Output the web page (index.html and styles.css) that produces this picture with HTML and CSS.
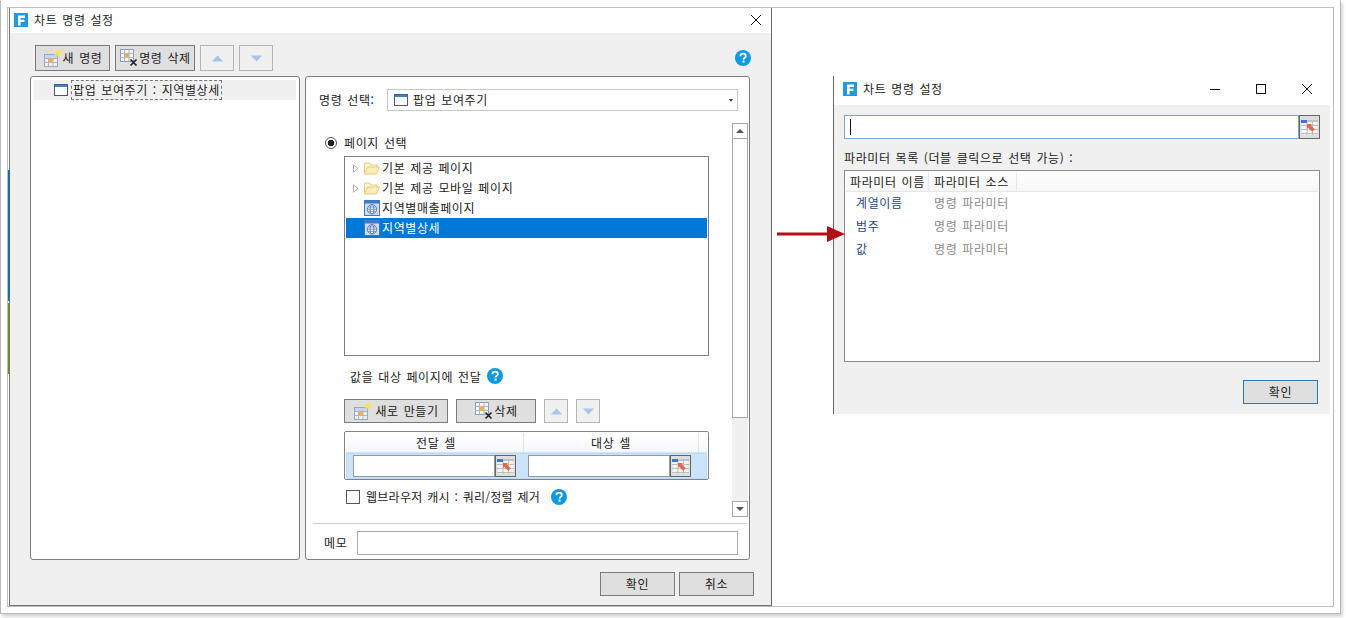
FILE: index.html
```html
<!DOCTYPE html>
<html lang="ko">
<head>
<meta charset="utf-8">
<title>차트 명령 설정</title>
<link rel="stylesheet" href="styles.css">
</head>
<body>
<svg class="defs" width="0" height="0" aria-hidden="true">
  <symbol id="i-logo" viewBox="0 0 14 14"><rect width="14" height="14" fill="#1b9ce2"/><path d="M4 2.5h7v2.4H6.6v1.9h3.9v2.3H6.6v3.4H4z" fill="#fff"/></symbol>
  <symbol id="i-win" viewBox="0 0 14 12"><rect x=".5" y=".5" width="13" height="11" fill="#fff" stroke="#4a5a78"/><rect x="1" y="1" width="12" height="2" fill="#3f7fd6"/></symbol>
  <symbol id="i-new" viewBox="0 0 20 20"><rect x="1.5" y="6.5" width="13" height="12" fill="#eef2f8" stroke="#9aa6b8"/><path d="M1.5 10.500h13M1.500 14.500h13M5.500 6.500v12M10 6.500v12" stroke="#a9b4c6"/><rect x="6" y="10.500" width="4" height="4" fill="#f3b04a"/><rect x="2" y="7" width="12" height="3" fill="#c7d6ee"/><path d="M15 .5l1 3 3-1-2 2.500 2 2.500-3-1-1 3-1-3-3 1 2-2.500-2-2.500 3 1z" fill="#ffe14d"/></symbol>
  <symbol id="i-del" viewBox="0 0 20 20"><rect x="1.500" y="1.500" width="13" height="12" fill="#f4f6fa" stroke="#8f9bb0"/><path d="M1.500 5.500h13M1.500 9.500h13M5.500 1.500v12M10 1.500v12" stroke="#a9b4c6"/><rect x="6" y="5.500" width="4" height="4" fill="#f3b04a"/><path d="M11.500 11.500l6 6M17.500 11.500l-6 6" stroke="#222" stroke-width="1.700"/></symbol>
  <symbol id="i-up" viewBox="0 0 14 8"><path d="M7 .5l6.500 7H.5z" fill="#a9c3ec"/></symbol>
  <symbol id="i-down" viewBox="0 0 14 8"><path d="M.5.500h13L7 7.500z" fill="#a9c3ec"/></symbol>
  <symbol id="i-help" viewBox="0 0 16 16"><circle cx="8" cy="8" r="8" fill="#0f9ae0"/><path d="M5.300 6.200C5.400 4.500 6.600 3.600 8.100 3.600c1.600 0 2.700.9 2.700 2.300 0 2-2.200 2-2.200 3.600" fill="none" stroke="#fff" stroke-width="1.800"/><rect x="7.500" y="10.600" width="2" height="2" fill="#fff"/></symbol>
  <symbol id="i-folder" viewBox="0 0 16 13"><path d="M.5 11.500V1.500h5l1.500 2h6v2" fill="#fff6d8" stroke="#e8c778"/><path d="M.5 12.500l3-7h12l-3 7z" fill="#fdeeb8" stroke="#e8c778"/></symbol>
  <symbol id="i-page" viewBox="0 0 16 16"><rect x=".5" y=".5" width="15" height="15" fill="#cfdcf3" stroke="#3f78c4"/><rect x="1" y="1" width="14" height="2.500" fill="#3f78c4"/><circle cx="8" cy="9.300" r="4.700" fill="#eef3fb" stroke="#5f86bd"/><ellipse cx="8" cy="9.300" rx="2" ry="4.700" fill="none" stroke="#5f86bd"/><path d="M3.300 9.300h9.400M4 7h8M4 11.600h8" stroke="#5f86bd" stroke-width=".8"/></symbol>
  <symbol id="i-pick" viewBox="0 0 17 15"><rect x=".5" y=".5" width="16" height="14" fill="#f4f4f4"/><path d="M0 5.500h17M0 9.500h17M0 13.500h17M6 0v15M11.500 0v15" stroke="#bdbdbd"/><rect x="0" y="0" width="17" height="2" fill="#c2c2c2"/><rect x="0" y="0" width="6" height="3" fill="#3f74d1"/><path d="M6 4h5l-1.200 1.200 4 4-2.600 2.600-4-4L6 9z" fill="#e2694f"/></symbol>
  <symbol id="i-exp" viewBox="0 0 6 9"><path d="M.5.800l4.500 3.700L.5 8.200z" fill="#fff" stroke="#a8a8a8"/></symbol>
</svg>

<div class="shot">
  <div class="canvas">
    <section class="window window-main">
      <header class="titlebar titlebar-main">
        <svg class="logo"><use href="#i-logo"/></svg>
        <span class="title">차트 명령 설정</span>
        <svg class="close close-main" viewBox="0 0 12 12"><path d="M1 1l10 10M11 1L1 11" stroke="#111"/></svg>
      </header>
      <div class="main-body">
        <div class="toolbar">
          <button class="btn btn-new"><svg class="ico20"><use href="#i-new"/></svg>새 명령</button>
          <button class="btn btn-del"><svg class="ico20"><use href="#i-del"/></svg>명령 삭제</button>
          <button class="btn-arrow btn-arrow-lg"><svg class="tri"><use href="#i-up"/></svg></button>
          <button class="btn-arrow btn-arrow-lg"><svg class="tri"><use href="#i-down"/></svg></button>
          <svg class="help help-top"><use href="#i-help"/></svg>
        </div>
        <div class="panels">
          <aside class="panel panel-left">
            <div class="cmd-row">
              <svg class="win-ico"><use href="#i-win"/></svg>
              <span class="cmd-text">팝업 보여주기 : 지역별상세</span>
            </div>
          </aside>
          <div class="panel panel-right">
            <div class="cmd-select-row">
              <span class="label">명령 선택:</span>
              <div class="select">
                <svg class="win-ico win-ico-select"><use href="#i-win"/></svg>
                <span>팝업 보여주기</span>
                <span class="caret"></span>
              </div>
            </div>
            <div class="scroll-area">
              <div class="scroll-content">
                <label class="radio-row"><span class="radio"></span>페이지 선택</label>
                <ul class="tree">
                  <li class="tree-row"><svg class="expander"><use href="#i-exp"/></svg><svg class="tree-ico"><use href="#i-folder"/></svg>기본 제공 페이지</li>
                  <li class="tree-row"><svg class="expander"><use href="#i-exp"/></svg><svg class="tree-ico"><use href="#i-folder"/></svg>기본 제공 모바일 페이지</li>
                  <li class="tree-row tree-leaf"><svg class="tree-ico"><use href="#i-page"/></svg>지역별매출페이지</li>
                  <li class="tree-row tree-leaf tree-selected"><svg class="tree-ico"><use href="#i-page"/></svg>지역별상세</li>
                </ul>
                <div class="pass-row">값을 대상 페이지에 전달<svg class="help"><use href="#i-help"/></svg></div>
                <div class="sub-toolbar">
                  <button class="btn btn-create"><svg class="ico20"><use href="#i-new"/></svg>새로 만들기</button>
                  <button class="btn btn-remove"><svg class="ico20"><use href="#i-del"/></svg>삭제</button>
                  <button class="btn-arrow"><svg class="tri"><use href="#i-up"/></svg></button>
                  <button class="btn-arrow"><svg class="tri"><use href="#i-down"/></svg></button>
                </div>
                <div class="grid">
                  <div class="grid-head">
                    <span class="grid-col">전달 셀</span>
                    <span class="grid-col">대상 셀</span>
                  </div>
                  <div class="grid-row">
                    <div class="cell"><span class="cell-input"></span><button class="pick"><svg class="pick-ico"><use href="#i-pick"/></svg></button></div>
                    <div class="cell"><span class="cell-input"></span><button class="pick"><svg class="pick-ico"><use href="#i-pick"/></svg></button></div>
                  </div>
                </div>
                <label class="check-row"><span class="check"></span><span class="check-text">웹브라우저 캐시 : 쿼리/정렬 제거</span><svg class="help help-check"><use href="#i-help"/></svg></label>
                <div class="cut-line"></div>
              </div>
              <div class="scrollbar">
                <span class="sb-btn"><span class="sb-up"></span></span>
                <span class="sb-thumb"></span>
                <span class="sb-btn sb-btn-end"><span class="sb-down"></span></span>
              </div>
            </div>
            <div class="divider"></div>
            <div class="memo-row">
              <span class="label">메모</span>
              <span class="memo-input"></span>
            </div>
          </div>
        </div>
        <div class="footer">
          <button class="btn btn-foot">확인</button>
          <button class="btn btn-foot">취소</button>
        </div>
      </div>
    </section>

    <span class="stripe stripe-blue"></span>
    <span class="stripe stripe-green"></span>

    <section class="window window-param">
      <header class="titlebar titlebar-param">
        <svg class="logo"><use href="#i-logo"/></svg>
        <span class="title">차트 명령 설정</span>
        <div class="win-controls">
          <svg class="ctl" viewBox="0 0 12 12"><path d="M1 6.500h10" stroke="#111"/></svg>
          <svg class="ctl" viewBox="0 0 12 12"><rect x="1.500" y="1.500" width="9" height="9" fill="none" stroke="#111"/></svg>
          <svg class="ctl" viewBox="0 0 12 12"><path d="M1 1l10 10M11 1L1 11" stroke="#111"/></svg>
        </div>
      </header>
      <div class="param-body">
        <div class="param-input-row">
          <div class="param-input"><span class="text-caret"></span></div>
          <button class="pick pick-lg"><svg class="pick-ico"><use href="#i-pick"/></svg></button>
        </div>
        <div class="param-label">파라미터 목록 (더블 클릭으로 선택 가능) :</div>
        <div class="param-list">
          <div class="list-head">
            <span class="lh lh-name">파라미터 이름</span>
            <span class="lh lh-src">파라미터 소스</span>
          </div>
          <div class="list-row"><span class="lc-name">계열이름</span><span class="lc-src">명령 파라미터</span></div>
          <div class="list-row"><span class="lc-name">범주</span><span class="lc-src">명령 파라미터</span></div>
          <div class="list-row"><span class="lc-name">값</span><span class="lc-src">명령 파라미터</span></div>
        </div>
        <div class="param-foot"><button class="btn btn-foot btn-default">확인</button></div>
      </div>
    </section>

    <svg class="red-arrow" viewBox="0 0 68 18"><path d="M0 7.500h50V1l18 8-18 8v-6.500H0z" fill="#b01116"/></svg>
  </div>
</div>
</body>
</html>
```

FILE: styles.css
```css
* { box-sizing: border-box; }
html, body { margin: 0; padding: 0; }
body {
  width: 1346px;
  height: 618px;
  overflow: hidden;
  background: #fff;
  font-family: "Noto Sans CJK KR", "Noto Sans", sans-serif;
  font-size: 12px;
  letter-spacing: 0.6px;
  word-spacing: 1px;
  color: #222;
}
.defs { position: absolute; }
button { font: inherit; letter-spacing: inherit; word-spacing: inherit; color: inherit; padding: 0; margin: 0; }
ul { list-style: none; margin: 0; padding: 0; }
svg { display: block; flex: none; }

.shot {
  width: 1341px;
  height: 614px;
  padding: 6px;
  background: #fff;
  border: 1px solid #b9b9b9;
  border-top-color: #fff;
  box-shadow: 2px 3px 3px #d8d8d8;
}
.canvas {
  position: relative;
  width: 1327px;
  height: 600px;
  border: 1px solid #bdbdbd;
}
.stripe { position: absolute; left: 0; width: 2px; }
.stripe-blue { top: 162px; height: 131px; background: #1f6f9c; }
.stripe-green { top: 295px; height: 71px; background: #6d8a3a; }

.window { position: absolute; }
.window-main {
  left: 1px;
  top: 0;
  width: 763px;
  height: 598px;
  display: flex;
  flex-direction: column;
  border-left: 1px solid #777;
  border-right: 1px solid #666;
  border-bottom: 1px solid #777;
  background: #f0f0f0;
}
.window-param {
  left: 825px;
  top: 68px;
  width: 497px;
  height: 338px;
  display: flex;
  flex-direction: column;
  border-left: 1px solid #666;
  background: #f0f0f0;
}

.titlebar {
  flex: none;
  display: flex;
  align-items: center;
  background: #fff;
}
.titlebar-main { height: 25px; padding: 0 0 1px 4px; }
.titlebar-param { height: 29px; padding: 0 0 3px 9px; }
.logo { width: 14px; height: 14px; }
.title { margin-left: 6px; padding-bottom: 2px; }
.close { width: 12px; height: 12px; }
.close-main { margin-left: auto; margin-right: 9px; }
.win-controls { margin-left: auto; display: flex; gap: 34px; margin-right: 17px; }
.ctl { width: 12px; height: 12px; }

.main-body { flex: 1; display: flex; flex-direction: column; padding: 12px 17px 0 20px; }
.toolbar { flex: none; height: 26px; display: flex; align-items: center; gap: 5px; margin-left: 5px; padding-right: 3px; }
.btn {
  display: flex;
  align-items: center;
  justify-content: center;
  padding-bottom: 2px;
  background: #dfdfdf;
  border: 1px solid #7a7a7a;
}
.btn-new { width: 75px; height: 26px; }
.btn-del { width: 80px; height: 26px; }
.ico20 { width: 20px; height: 20px; margin-top: 2px; }
.btn-arrow {
  width: 24px;
  height: 24px;
  display: flex;
  align-items: center;
  justify-content: center;
  background: #f0f0f0;
  border: 1px solid #b5b5b5;
}
.btn-arrow-lg { width: 34px; height: 26px; }
.tri { width: 13px; height: 7px; }
.help { width: 16px; height: 16px; margin-left: 6px; }
.help-top { margin-left: auto; }
.help-check { margin-left: 11px; }

.panels { flex: none; display: flex; gap: 5px; margin-top: 5px; height: 484px; }
.panel { background: #fff; border: 1px solid #7d7d7d; border-radius: 3px; }
.panel-left { width: 270px; padding: 3px; }
.panel-right { width: 445px; display: flex; flex-direction: column; }
.cmd-row { height: 20px; display: flex; align-items: center; padding-left: 20px; background: #f0f0f0; }
.win-ico { width: 14px; height: 12px; }
.win-ico-select { margin-top: 2px; }
.cmd-text { height: 20px; margin-left: 3px; padding: 0 1px 1px; display: flex; align-items: center; border: 1px dashed #777; }

.cmd-select-row { flex: none; display: flex; align-items: center; height: 22px; margin-top: 12px; padding-left: 13px; }
.label { flex: none; padding-bottom: 2px; }
.select {
  position: relative;
  margin-left: auto;
  margin-right: 11px;
  width: 351px;
  height: 22px;
  display: flex;
  align-items: center;
  gap: 5px;
  padding: 0 0 2px 6px;
  border: 1px solid #c8c8c8;
}
.caret { position: absolute; right: 4px; top: 9px; border: 2px solid transparent; border-top: 3px solid #444; border-bottom: 0; }

.scroll-area { flex: none; height: 394px; margin-top: 12px; display: flex; }
.scroll-content { width: 426px; overflow: hidden; padding-left: 19px; }
.radio-row { height: 16px; margin-top: 12px; padding-bottom: 2px; display: flex; align-items: center; gap: 7px; }
.radio { width: 12px; height: 12px; margin-top: 2px; border-radius: 50%; border: 1px solid #555; background: radial-gradient(circle, #222 0 3px, #fff 3.6px); }
.tree { width: 365px; height: 200px; margin: 5px 0 0 19px; padding: 1px; border: 1px solid #7d7d7d; }
.tree-row { height: 20px; display: flex; align-items: center; padding: 0 0 2px 7px; }
.tree-leaf { padding-left: 18px; }
.tree-selected { background: #0078d7; color: #fff; }
.expander { width: 6px; height: 9px; margin: 2px 5px 0 0; }
.tree-ico { width: 16px; height: 16px; margin: 2px 2px 0 0; }
.pass-row { height: 20px; margin: 10px 0 0 25px; display: flex; align-items: center; }
.sub-toolbar { height: 24px; margin: 13px 0 0 19px; display: flex; gap: 8px; }
.btn-create { width: 104px; gap: 2px; }
.btn-remove { width: 80px; }
.grid { width: 365px; height: 49px; margin: 8px 0 0 19px; padding: 1px; border: 1px solid #7d8590; border-radius: 2px; }
.grid-head { height: 20px; display: flex; padding-left: 3px; background: linear-gradient(#fff, #f4f8fc); border-bottom: 1px solid #d6e4f2; }
.grid-col { width: 175px; text-align: center; line-height: 19px; border-right: 1px solid #e4e4e4; }
.grid-row { height: 26px; display: flex; gap: 12px; align-items: center; padding-left: 6px; background: #cce4fa; border: 1px solid #bcd9f5; }
.cell { width: 163px; height: 22px; display: flex; }
.cell-input { flex: 1; background: #fff; border: 1px solid #8d9aa8; }
.pick { width: 21px; height: 22px; display: flex; align-items: center; justify-content: center; background: #dedede; border: 1px solid #666; }
.pick-ico { width: 17px; height: 15px; }
.check-row { height: 16px; margin: 9px 0 0 21px; display: flex; align-items: center; }
.check { width: 14px; height: 14px; margin-right: 6px; background: #fff; border: 1px solid #555; }
.check-text { letter-spacing: 0.27px; padding-bottom: 1px; }
.cut-line { width: 168px; height: 1px; margin: 12px 0 0 213px; background: #a9a9a9; }

.scrollbar { width: 16px; height: 394px; display: flex; flex-direction: column; background: #f0f0f0; }
.sb-btn { flex: none; height: 16px; display: flex; align-items: center; justify-content: center; background: #fff; border: 1px solid #a8a8a8; }
.sb-btn-end { margin-top: auto; }
.sb-thumb { flex: none; width: 16px; height: 279px; background: #fff; border: 1px solid #a8a8a8; border-top: 0; }
.sb-up { border: 4px solid transparent; border-bottom: 4px solid #555; border-top: 0; }
.sb-down { border: 4px solid transparent; border-top: 4px solid #555; border-bottom: 0; }

.divider { flex: none; height: 1px; margin: 6px 2px 0 7px; background: #d0d0d0; }
.memo-row { flex: none; display: flex; align-items: center; height: 24px; margin-top: 7px; padding-left: 18px; }
.memo-input { width: 381px; height: 24px; margin-left: auto; margin-right: 11px; background: #fff; border: 1px solid #ababab; }

.footer { flex: none; margin-top: 12px; display: flex; gap: 4px; justify-content: flex-end; }
.btn-foot { width: 75px; height: 24px; }

.param-body { flex: 1; display: flex; flex-direction: column; padding: 10px 10px 0 10px; }
.param-input-row { flex: none; display: flex; height: 24px; }
.param-input { flex: 1; display: flex; align-items: center; padding-left: 5px; background: #fff; border: 1px solid #7aa7cb; }
.text-caret { width: 1px; height: 16px; background: #111; }
.pick-lg { height: 24px; }
.param-label { flex: none; height: 18px; margin-top: 10px; line-height: 18px; }
.param-list { flex: none; height: 192px; margin-top: 3px; padding: 1px; background: #fff; border: 1px solid #8a8a8a; }
.list-head { height: 20px; display: flex; padding-left: 4px; background: linear-gradient(#fff, #f6f6f6); border-bottom: 1px solid #e6e6e6; }
.lh { line-height: 19px; border-right: 1px solid #e6e6e6; }
.lh-name { width: 79px; }
.lh-src { width: 88px; padding-left: 5px; }
.list-row { height: 23px; display: flex; align-items: center; padding: 0 0 3px 10px; }
.lc-name { width: 78px; color: #1f4a78; }
.lc-src { color: #8a8a8a; }
.param-foot { flex: none; margin-top: 18px; display: flex; justify-content: flex-end; padding-right: 2px; }
.btn-default { border-color: #2a78b5; }

.red-arrow { position: absolute; left: 769px; top: 217px; width: 68px; height: 18px; }
```
